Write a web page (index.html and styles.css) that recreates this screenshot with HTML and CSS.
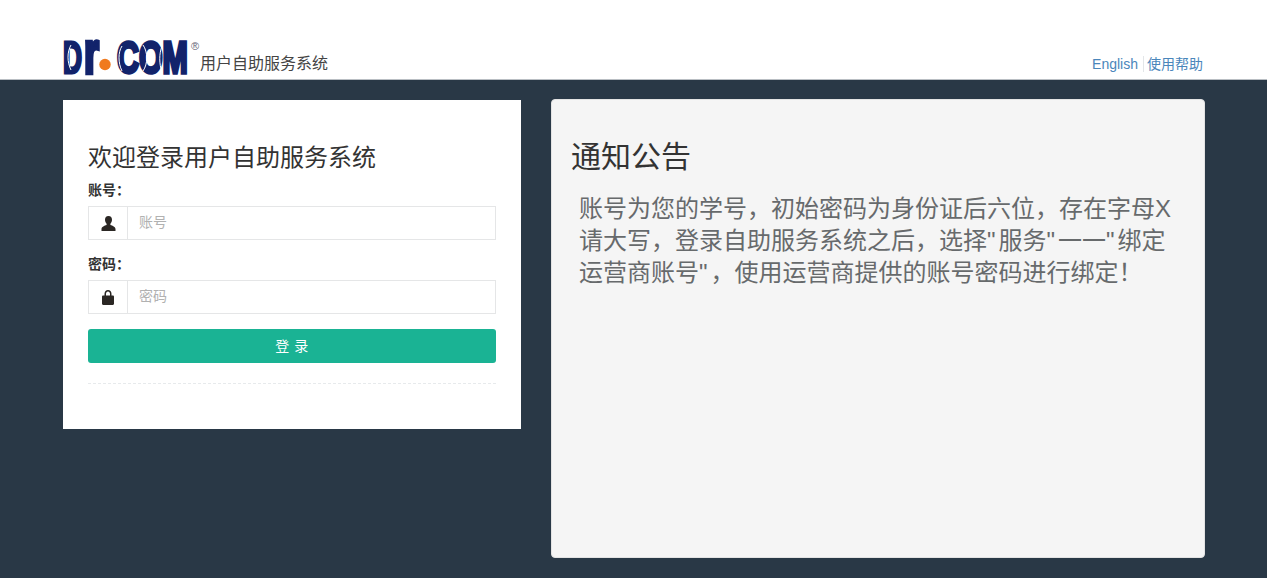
FILE: index.html
```html
<!DOCTYPE html>
<html lang="zh-CN">
<head>
<meta charset="utf-8">
<title>用户自助服务系统</title>
<link rel="stylesheet" href="styles.css">
</head>
<body>
<header class="top">
  <div class="brand">
    <svg class="logo" width="138" height="67" viewBox="0 0 138 67" aria-label="Dr.COM">
      <text class="logo-text" transform="translate(1 54) scale(.6 1)">D</text>
      <text class="logo-text logo-r" transform="translate(22 54) scale(.8 1.25)">r</text>
      <circle class="logo-dot" cx="43" cy="45.500" r="5.700"/>
      <text class="logo-text logo-com" transform="translate(55 54) scale(.69 1)">COM</text>
      <path class="logo-cut" d="M9 26C5 33 5 43 9 51M60 27C56 33 56 44 60 52M81 26C86 33 86 45 81 52M100 27C97 35 97 44 100 54"/>
      <text class="logo-reg" x="129" y="31">®</text>
    </svg>
    <span class="brand-name">用户自助服务系统</span>
  </div>
  <nav class="links"><a class="link">English</a><a class="link link-help">使用帮助</a></nav>
</header>
<main class="content">
  <section class="login">
    <h2 class="login-title">欢迎登录用户自助服务系统</h2>
    <label class="field-label">账号：</label>
    <div class="input-group">
      <span class="addon">
        <svg width="15" height="15" viewBox="0 0 15 15"><path fill="#2b2724" d="M7.500 0C5.100 0 4 1.700 4 3.800 4 5.600 4.800 6.900 5.600 7.800V9C3.500 9.800.5 10.600.5 13V15h14v-2C14.500 10.600 11.500 9.800 9.400 9V7.800C10.200 6.900 11 5.600 11 3.800 11 1.700 9.900 0 7.500 0Z"/></svg>
      </span>
      <input class="text-input" type="text" placeholder="账号">
    </div>
    <label class="field-label field-label-2">密码：</label>
    <div class="input-group">
      <span class="addon">
        <svg width="14" height="15" viewBox="0 0 14 15"><path fill="#2b2724" d="M3.500 5.500V3.800C3.500 1.500 5 0 7 0s3.500 1.500 3.500 3.800V5.500h1.300c.7 0 1.200.5 1.200 1.200v7.100c0 .7-.5 1.200-1.200 1.200H2.200C1.500 15 1 14.500 1 13.800V6.700C1 6 1.500 5.500 2.200 5.500H3.500ZM5 5.500h4V3.800C9 2.400 8.200 1.400 7 1.400S5 2.400 5 3.800V5.500Z"/></svg>
      </span>
      <input class="text-input" type="password" placeholder="密码">
    </div>
    <button class="submit" type="button">登 录</button>
    <div class="dash"></div>
  </section>
  <section class="notice">
    <h2 class="notice-title">通知公告</h2>
    <div class="notice-text">
      <p class="notice-line">账号为您的学号，初始密码为身份证后六位，存在字母X</p>
      <p class="notice-line">请大写，登录自助服务系统之后，选择<span class="quote">"</span>服务<span class="quote">"</span>一一<span class="quote">"</span>绑定</p>
      <p class="notice-line">运营商账号<span class="quote">"</span>，使用运营商提供的账号密码进行绑定！</p>
    </div>
  </section>
</main>
</body>
</html>
```
FILE: styles.css
```css
* { box-sizing: border-box; }
html, body { margin: 0; height: 100%; }
body {
  background: #293846;
  font-family: "Liberation Sans", "Noto Sans CJK SC", sans-serif;
  color: #333;
  font-size: 14px;
  height: 578px;
  overflow: hidden;
}
.top {
  height: 80px;
  background: #fff;
  border-bottom: 1px solid #b9bec3;
  padding: 0 64px 0 62px;
  display: flex;
  justify-content: space-between;
  align-items: flex-end;
}
.brand { display: flex; align-items: flex-end; }
.logo { display: block; margin-bottom: -7px; }
.logo-text { font-family: "Liberation Sans", sans-serif; font-weight: 700; font-size: 44px; fill: #12236b; stroke: #12236b; stroke-width: 3px; }
.logo-r { font-size: 48px; stroke-width: 3.500px; }
.logo-com { stroke-width: 3.500px; }
.logo-cut { fill: none; stroke: #fff; stroke-width: 1px; }
.logo-dot { fill: #f07a1e; }
.logo-reg { font-family: "Liberation Sans", sans-serif; font-size: 11px; fill: #667; }
.brand-name { font-size: 16px; line-height: 20px; margin-bottom: 5px; color: #444; }
.links { display: flex; align-items: center; margin-bottom: 7px; line-height: 16px; }
.link { color: #4a86bb; font-size: 14px; }
.link-help { border-left: 1px solid #e3e6e8; margin-left: 5px; padding-left: 3px; }
.content { display: flex; align-items: flex-start; gap: 30px; padding: 20px 62px 0 63px; }
.login {
  width: 458px;
  height: 329px;
  background: #fff;
  padding: 43px 25px 0;
  display: flex;
  flex-direction: column;
}
.login-title { margin: 0; font-size: 24px; font-weight: 400; line-height: 30px; color: #333; }
.field-label { font-size: 14px; font-weight: 700; line-height: 18px; margin-top: 8px; color: #333; }
.field-label-2 { margin-top: 15px; }
.input-group { display: flex; height: 34px; margin-top: 7px; border: 1px solid #e5e6e7; }
.addon { width: 39px; flex: none; display: flex; align-items: center; justify-content: center; border-right: 1px solid #e5e6e7; }
.text-input { flex: 1; min-width: 0; border: 0; outline: 0; padding: 0 11px 2px; font: 14px "Liberation Sans", "Noto Sans CJK SC", sans-serif; background: #fff; }
.text-input::placeholder { color: #b1b1b1; opacity: 1; }
.submit {
  margin-top: 15px;
  height: 34px;
  border: 0;
  border-radius: 3px;
  background: #1ab394;
  color: #fff;
  font: 14px "Liberation Sans", "Noto Sans CJK SC", sans-serif;
  letter-spacing: 0.5px;
  padding: 0 0 3px;
}
.dash { margin-top: 20px; border-top: 1px dashed #e7eaec; }
.notice {
  width: 654px;
  height: 459px;
  margin-top: -1px;
  background: #f5f5f5;
  border: 1px solid #e3e3e3;
  border-radius: 4px;
  padding: 37px 19px 0;
}
.notice-title { margin: 0; font-size: 30px; font-weight: 400; line-height: 40px; color: #333; }
.notice-text { margin: 16px 0 0 8px; width: 600px; font-size: 24px; line-height: 32px; color: #676a6c; }
.notice-line { margin: 0; white-space: nowrap; }
.quote { letter-spacing: 3px; }
```
